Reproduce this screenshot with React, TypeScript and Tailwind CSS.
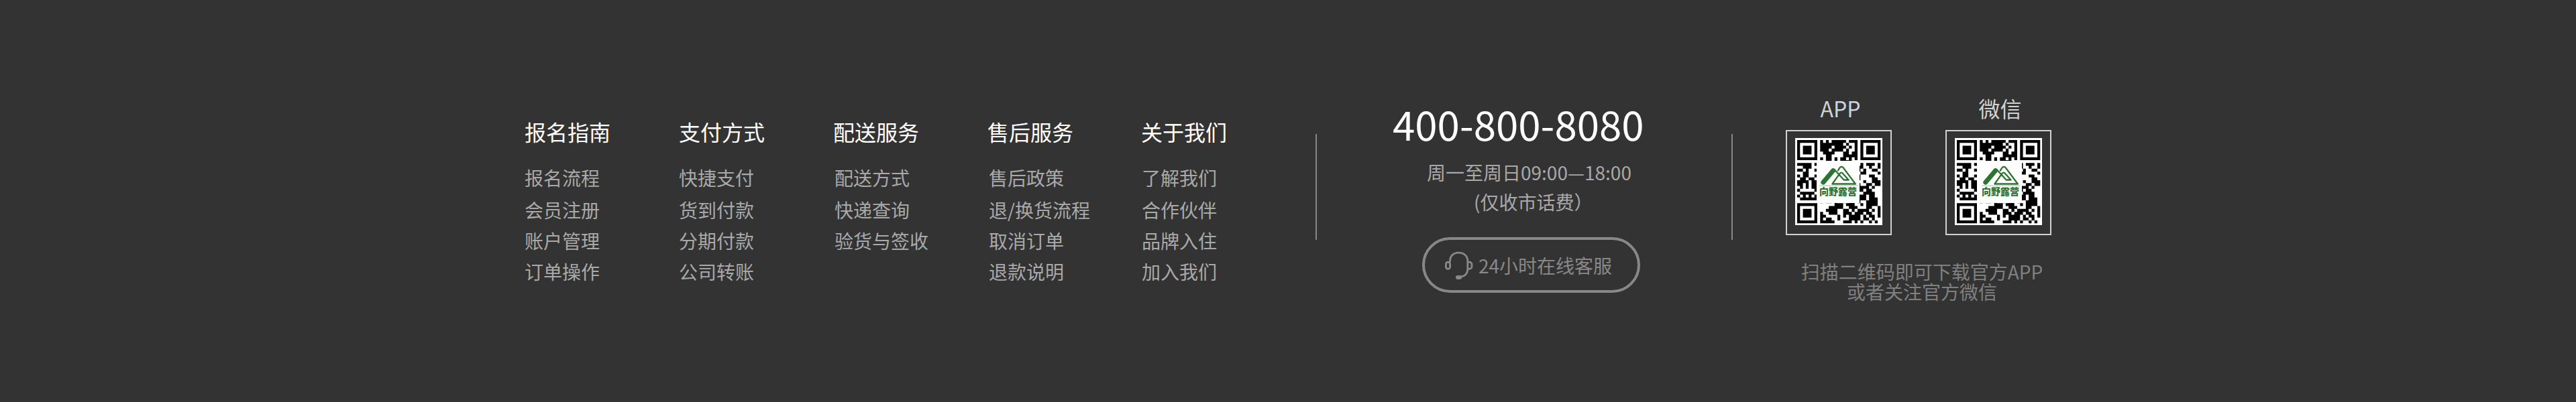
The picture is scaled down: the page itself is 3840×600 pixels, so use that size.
const columns = [
  { title: '报名指南', width: 'w-[230px]', indent: '', items: ['报名流程', '会员注册', '账户管理', '订单操作'] },
  { title: '支付方式', width: 'w-[230px]', indent: '', items: ['快捷支付', '货到付款', '分期付款', '公司转账'] },
  { title: '配送服务', width: 'w-[230px]', indent: 'pl-[2px]', items: ['配送方式', '快递查询', '验货与签收'] },
  { title: '售后服务', width: 'w-[229px]', indent: 'pl-[2px]', items: ['售后政策', '退/换货流程', '取消订单', '退款说明'] },
  { title: '关于我们', width: 'w-[260px]', indent: 'pl-[1px]', items: ['了解我们', '合作伙伴', '品牌入住', '加入我们'] },
];

const modules = [
  '#######.#.#.#####.###.#######',
  '#.....#.########.#..#.#.....#',
  '#.###.#.####.####.#.#.#.###.#',
  '#.###.#.###.####.#..#.#.###.#',
  '#.###.#..####...##.##.#.###.#',
  '#.....#...##....#####.#.....#',
  '#######.#.##.#.##.#.#.#######',
  '..........##.#.####..........',
  '#####.#...............#.###.#',
  '..###................##..#..#',
  '##.#..#..............#.#..##.',
  '..##..................##....#',
  '#.##..#..............#...##..',
  '.##.##...............#....##.',
  '####.##................#..###',
  '##.#.##..............#..##.##',
  '.#.#.##..............####.#..',
  '#.....#..............##.##...',
  '.#####.................####..',
  '#.#.#.#..............###.##..',
  '.######..............###.###.',
  '........#.##.#..#.##.#..####.',
  '#######......###.###..#.####.',
  '#.....#....#####..###...##..#',
  '#.###.#...####..##.#.####.#.#',
  '#.###.#.#..###..###.###.##..#',
  '#.###.#.##....#.#.####.#.##.#',
  '#.....#.#.##..#...####.##.#..',
  '#######.#####...###.#.#..#.#.',
];

const modulePath = modules
  .map((row, y) => [...row].map((cell, x) => (cell === '#' ? `M${x} ${y}h1v1h-1z` : '')).join(''))
  .join('');

function QrCode({ label, logoOffset }: { label: string; logoOffset: string }) {
  return (
    <div className="flex w-[158px] flex-col items-center">
      <div className="ml-[5px] h-10 whitespace-nowrap text-[32px] leading-10 text-[#d2d2d2]">{label}</div>
      <div className="mt-[13px] flex h-[157px] w-[158px] border-2 border-[#d2d2d2] pl-3 pt-[10px]">
        <div className="relative h-[130px] w-[130px] bg-white">
          <svg viewBox="0 0 29 29" className="ml-[3.3px] mt-[3.3px] h-[124.3px] w-[124.3px]">
            <path d={modulePath} fill="#000" />
          </svg>
          <div className={`absolute top-[34px] h-[63px] w-[64px] bg-white ${logoOffset}`}>
            <svg viewBox="264 330 192 190" className="absolute inset-0 h-full w-full" fill="none" stroke="#2d7431">
              <path d="M293 427L338 374" strokeWidth="21" strokeLinecap="round" />
              <path
                d="M360 374Q374 344 387 366L438 434H334L366 389Q374 378 382 388L407 416H386L344 370"
                strokeWidth="7"
                strokeLinejoin="round"
                strokeLinecap="round"
              />
              <path d="M276 442H450" strokeWidth="2" opacity="0.7" />
            </svg>
            <div className="absolute left-[4px] top-[37px] h-4 whitespace-nowrap text-[14px] font-black leading-4 text-[#2d7431]">
              向野露营
            </div>
          </div>
        </div>
      </div>
    </div>
  );
}

export default function App() {
  return (
    <footer className="flex h-[600px] w-[3840px] items-start overflow-hidden border-b border-[#3a3337] bg-[#333333] pl-[782px] font-['Noto_Sans_CJK_SC',sans-serif]">
      <nav className="flex pt-[172px]">
        {columns.map((column) => (
          <section key={column.title} className={column.width}>
            <h3 className="h-12 whitespace-nowrap text-[32px] leading-[48px] text-white">{column.title}</h3>
            <ul className={`mt-[22px] text-[28px] leading-[46px] text-[#a9a9a9] ${column.indent}`}>
              {column.items.map((item) => (
                <li key={item} className="whitespace-nowrap first:mb-[2px]">{item}</li>
              ))}
            </ul>
          </section>
        ))}
      </nav>

      <div className="mt-[200px] h-[158px] w-[2px] bg-[#888888]" />

      <section className="flex w-[618px] flex-col pl-[112px] pt-[154px]">
        <div className="ml-px whitespace-nowrap text-[60px] leading-[60px] text-white">400-800-8080</div>
        <div className="ml-[52px] mt-[25px] whitespace-nowrap text-[28px] leading-9 text-[#a9a9a9]">周一至周日09:00—18:00</div>
        <div className="ml-[122px] mt-[8px] whitespace-nowrap text-[28px] leading-9 text-[#a9a9a9]">(仅收市话费）</div>
        <button className="ml-[45px] mt-[35px] flex h-[83px] w-[325px] items-center rounded-full border-4 border-[#888888] pl-[29px] text-[#888888]">
          <svg viewBox="0 0 44 44" className="h-11 w-11" fill="none" stroke="currentColor" strokeWidth="2.8">
            <path d="M8.5 17V15.5C8.5 7.5 14 3.2 21.5 3.2S34.8 8 34.8 15.5V27C34.8 35 30 39 23 39.2" />
            <rect x="2.4" y="17.2" width="6.2" height="10.2" rx="3.1" />
            <path d="M35 17.2h2.4a3.6 3.6 0 0 1 3.6 3.6v3a3.6 3.6 0 0 1-3.6 3.6H35" />
            <rect x="17" y="37" width="9" height="6" rx="3" fill="currentColor" stroke="none" />
          </svg>
          <span className="ml-[7px] whitespace-nowrap text-[28px] leading-9">24小时在线客服</span>
        </button>
      </section>

      <div className="mt-[200px] h-[158px] w-[2px] bg-[#888888]" />

      <section className="ml-[79px] flex w-[400px] flex-col pt-[141px]">
        <div className="flex gap-20">
          <QrCode label="APP" logoOffset="left-[32px]" />
          <QrCode label="微信" logoOffset="left-[36px]" />
        </div>
        <p className="mt-[39px] w-[406px] text-center text-[28px] leading-[30px] text-[#808080]">
          扫描二维码即可下载官方APP
          <br />
          或者关注官方微信
        </p>
      </section>
    </footer>
  );
}
